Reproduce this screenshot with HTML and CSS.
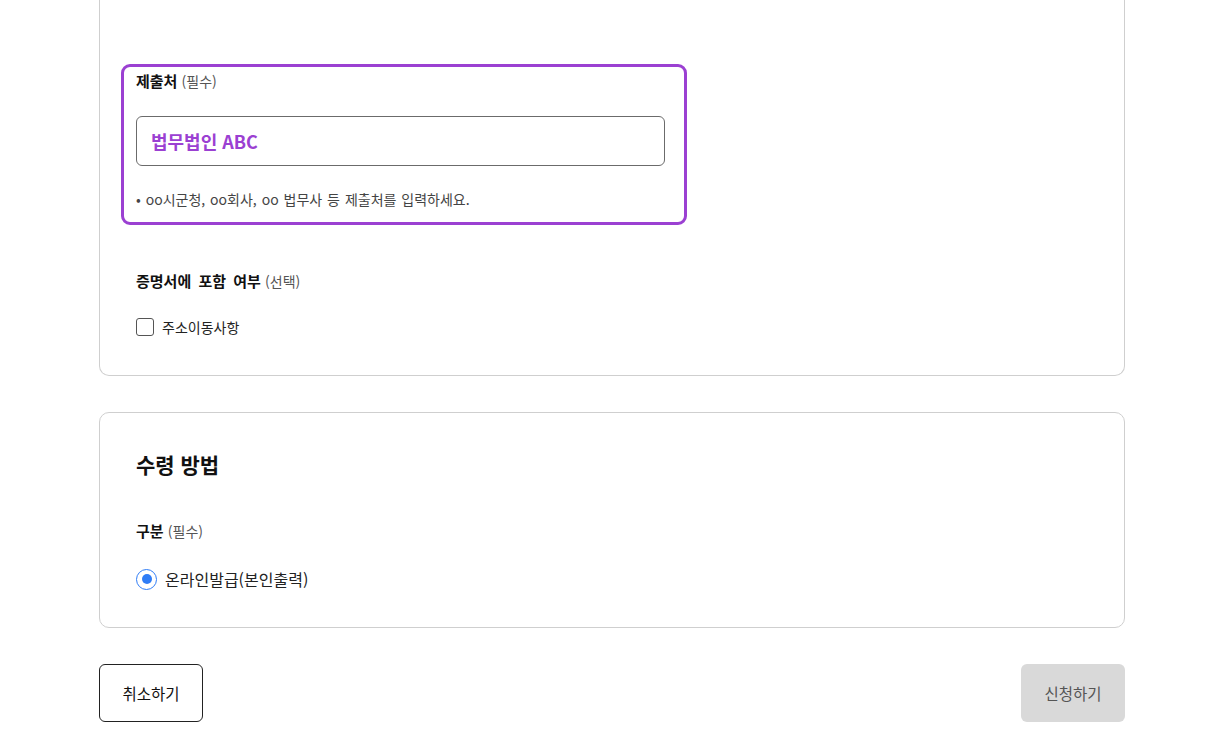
FILE: index.html
```html
<!DOCTYPE html>
<html lang="ko">
<head>
<meta charset="utf-8">
<title>신청</title>
<link rel="stylesheet" href="styles.css">
</head>
<body>
<main class="page">
  <section class="card card-cut">
    <div class="field field-focus">
      <div class="label"><strong>제출처</strong> <span class="hint">(필수)</span></div>
      <div class="input">법무법인 ABC</div>
      <p class="help">• oo시군청, oo회사, oo 법무사 등 제출처를 입력하세요.</p>
    </div>
    <div class="field field-plain">
      <div class="label"><strong>증명서에 포함 여부</strong> <span class="hint">(선택)</span></div>
      <label class="check-row"><span class="checkbox"></span><span>주소이동사항</span></label>
    </div>
  </section>

  <section class="card">
    <h2 class="title">수령 방법</h2>
    <div class="field field-plain2">
      <div class="label"><strong>구분</strong> <span class="hint">(필수)</span></div>
      <label class="radio-row"><span class="radio"><span class="dot"></span></span><span>온라인발급(본인출력)</span></label>
    </div>
  </section>

  <div class="actions">
    <button class="btn btn-cancel">취소하기</button>
    <button class="btn btn-submit">신청하기</button>
  </div>
</main>
</body>
</html>
```

FILE: styles.css
```css
* { box-sizing: border-box; }
html, body { margin: 0; padding: 0; background: #fff; }
body {
  font-family: "Noto Sans CJK KR", "Noto Sans", sans-serif;
  color: #111;
}
.page {
  width: 1026px;
  margin-left: 99px;
  display: flex;
  flex-direction: column;
  gap: 36px;
}
.card {
  border: 1px solid #cfcfcf;
  border-radius: 10px;
  padding: 36px 36px 37px 36px;
  display: flex;
  flex-direction: column;
}
.card-cut {
  border-top: none;
  border-radius: 0 0 10px 10px;
  padding: 64px 36px 38px 21px;
}
.field-focus {
  width: 566px;
  border: 3px solid #9b40d2;
  border-radius: 9px;
  padding: 3px 19px 13px 12px;
  display: flex;
  flex-direction: column;
}
.label {
  font-size: 15px;
  line-height: 22px;
  height: 22px;
}
.label strong { font-weight: 700; color: #111; word-spacing: 3px; }
.hint { font-size: 14px; color: #555; }
.input {
  margin-top: 24px;
  height: 50px;
  border: 1px solid #6b6b6b;
  border-radius: 6px;
  padding: 0 14px;
  display: flex;
  align-items: center;
  font-size: 18px;
  font-weight: 700;
  color: #9b40d2;
}
.help {
  margin: 23px 0 0 0;
  font-size: 14px;
  line-height: 20px;
  word-spacing: 1px;
  color: #444;
}
.field-plain {
  margin-top: 45px;
  padding-left: 15px;
  display: flex;
  flex-direction: column;
}
.check-row {
  margin-top: 25px;
  display: flex;
  align-items: center;
  gap: 8px;
  font-size: 14px;
  line-height: 20px;
  color: #222;
}
.checkbox {
  width: 18px;
  height: 18px;
  border: 1.5px solid #555;
  border-radius: 3px;
  flex: none;
}
.title {
  margin: 0;
  font-size: 21px;
  line-height: 30px;
  font-weight: 700;
  color: #111;
}
.field-plain2 {
  margin-top: 41px;
  display: flex;
  flex-direction: column;
}
.radio-row {
  margin-top: 26px;
  display: flex;
  align-items: center;
  gap: 8px;
  font-size: 16px;
  line-height: 22px;
  color: #222;
}
.radio {
  width: 21px;
  height: 21px;
  border: 1.5px solid #2e7cf6;
  border-radius: 50%;
  display: flex;
  align-items: center;
  justify-content: center;
  flex: none;
}
.dot {
  width: 10px;
  height: 10px;
  border-radius: 50%;
  background: #2e7cf6;
}
.actions {
  display: flex;
  justify-content: space-between;
}
.btn {
  height: 58px;
  width: 104px;
  border-radius: 6px;
  font-family: "Noto Sans CJK KR", "Noto Sans", sans-serif;
  font-size: 15.5px;
  cursor: pointer;
}
.btn-cancel {
  background: #fff;
  border: 1px solid #222;
  color: #111;
}
.btn-submit {
  background: #d9d9d9;
  border: none;
  color: #555;
}
```
